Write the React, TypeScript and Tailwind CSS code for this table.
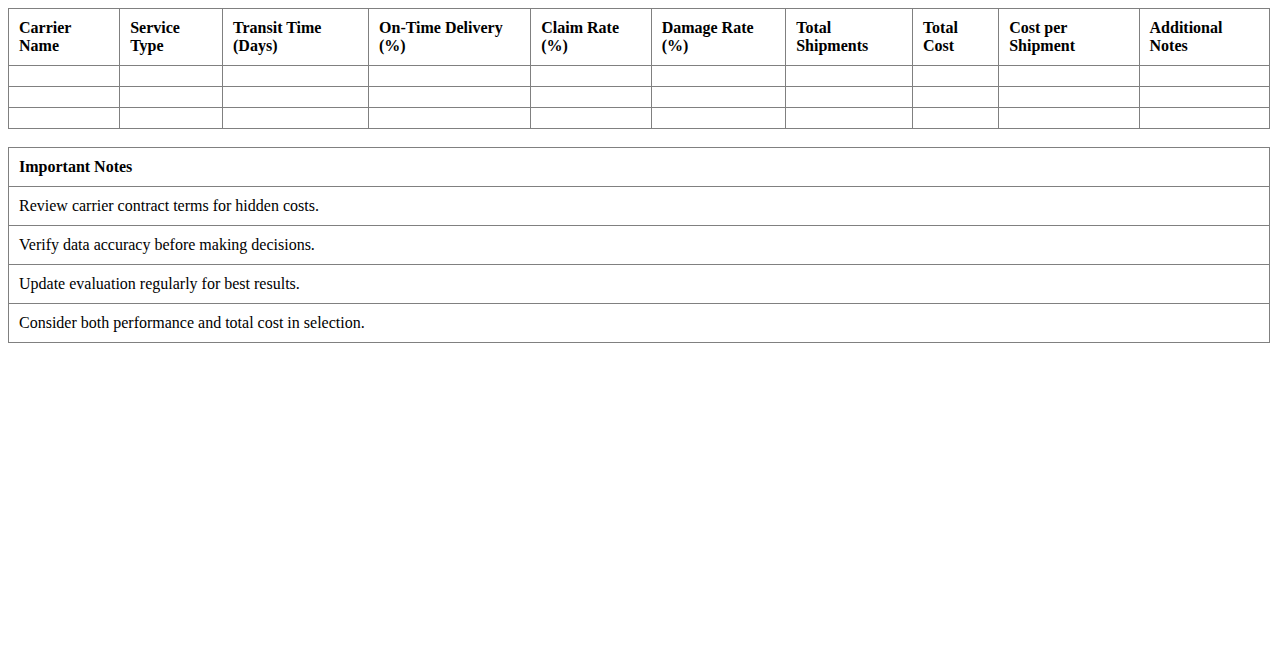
const columns = [
  "Carrier Name",
  "Service Type",
  "Transit Time (Days)",
  "On-Time Delivery (%)",
  "Claim Rate (%)",
  "Damage Rate (%)",
  "Total Shipments",
  "Total Cost",
  "Cost per Shipment",
  "Additional Notes",
];

const notes = [
  "Review carrier contract terms for hidden costs.",
  "Verify data accuracy before making decisions.",
  "Update evaluation regularly for best results.",
  "Consider both performance and total cost in selection.",
];

export default function App() {
  return (
    <div className="min-h-screen bg-white p-2 font-['Liberation_Serif',serif] text-base text-black">
      <table className="w-full border-collapse">
        <thead>
          <tr>
            {columns.map((c) => (
              <th key={c} className="border border-[#808080] p-[10px] text-left align-top font-bold leading-[18px]">
                {c}
              </th>
            ))}
          </tr>
        </thead>
        <tbody>
          {[0, 1, 2].map((r) => (
            <tr key={r}>
              {columns.map((c) => (
                <td key={c} className="h-[21px] border border-[#808080] p-[10px]"></td>
              ))}
            </tr>
          ))}
        </tbody>
      </table>

      <table className="mt-[18px] w-full border-collapse">
        <thead>
          <tr>
            <th className="border border-[#808080] p-[10px] text-left font-bold leading-[18px]">Important Notes</th>
          </tr>
        </thead>
        <tbody>
          {notes.map((n) => (
            <tr key={n}>
              <td className="border border-[#808080] p-[10px] leading-[18px]">{n}</td>
            </tr>
          ))}
        </tbody>
      </table>
    </div>
  );
}
